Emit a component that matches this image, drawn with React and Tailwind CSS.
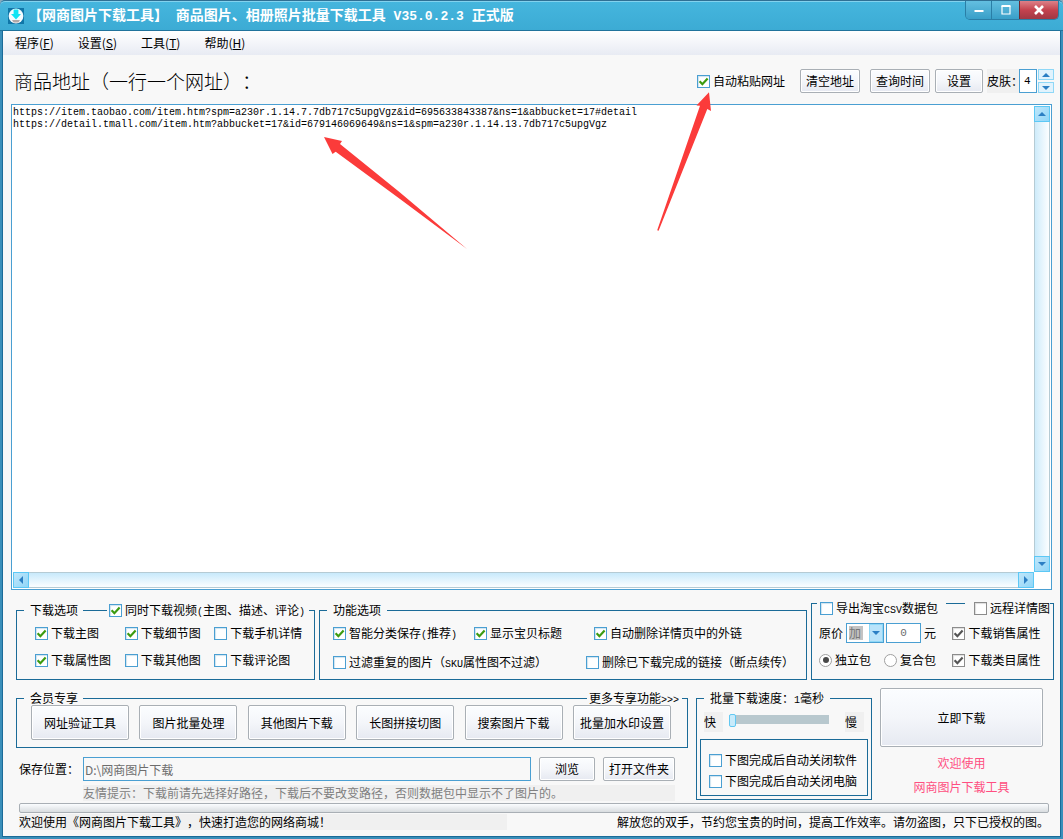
import React from "react";

const MEMBER_TOOLS = [
  "网址验证工具",
  "图片批量处理",
  "其他图片下载",
  "长图拼接切图",
  "搜索图片下载",
  "批量加水印设置",
];

const URLS = [
  "https://item.taobao.com/item.htm?spm=a230r.1.14.7.7db717c5upgVgz&id=695633843387&ns=1&abbucket=17#detail",
  "https://detail.tmall.com/item.htm?abbucket=17&id=679146069649&ns=1&spm=a230r.1.14.13.7db717c5upgVgz",
].join("\n");

const MENUS = [
  ["程序", "F"],
  ["设置", "S"],
  ["工具", "T"],
  ["帮助", "H"],
];

function Mono({ children }) {
  return <span className="font-['Liberation_Mono',monospace] text-[10px] leading-none">{children}</span>;
}

function Check({ children, checked = false, gray = false, className = "" }) {
  return (
    <label className={`flex h-4 items-center gap-[3px] whitespace-nowrap ${className}`}>
      <span className="grid size-[13px] shrink-0">
        <input
          type="checkbox"
          defaultChecked={checked}
          className={`peer col-start-1 row-start-1 size-[13px] appearance-none border bg-white ${
            gray
              ? "border-[#8c8c8c] shadow-[inset_1px_1px_1px_#dddddd]"
              : "border-[#4a9fd2] shadow-[inset_1px_1px_1px_#cfe3ef]"
          }`}
        />
        <svg
          viewBox="0 0 13 13"
          className="pointer-events-none invisible col-start-1 row-start-1 size-[13px] peer-checked:visible"
        >
          <path
            d="M2.6 6.2 L5.4 9.2 L10.6 3.6"
            fill="none"
            stroke={gray ? "#555555" : "#3d9b10"}
            strokeWidth="2.2"
          />
        </svg>
      </span>
      <span>{children}</span>
    </label>
  );
}

function Radio({ children, checked = false }) {
  return (
    <label className="flex items-center gap-[3px] whitespace-nowrap">
      <span className="grid size-[13px] shrink-0 place-items-center">
        <input
          type="radio"
          name="package"
          defaultChecked={checked}
          className="peer col-start-1 row-start-1 size-[13px] appearance-none rounded-full border border-[#a0a0a0] bg-white"
        />
        <span className="pointer-events-none invisible col-start-1 row-start-1 size-[6px] rounded-full bg-[#484848] peer-checked:visible" />
      </span>
      <span>{children}</span>
    </label>
  );
}

function Button({ children, className = "" }) {
  return (
    <button
      type="button"
      className={`shrink-0 whitespace-nowrap rounded-[2px] border border-[#a9afb5] bg-linear-to-b from-[#fbfdff] via-[#f4f6fa] to-[#e6e9f1] shadow-[inset_0_0_0_1px_#ffffff] ${className}`}
    >
      {children}
    </button>
  );
}

function Triangle({ dir }) {
  const paths = {
    up: "M0 6 L4 2 L8 6 Z",
    down: "M0 2 L8 2 L4 6 Z",
    left: "M6 0 L2 4 L6 8 Z",
    right: "M2 0 L6 4 L2 8 Z",
  };
  return (
    <svg viewBox="0 0 8 8" className="size-2">
      <path d={paths[dir]} fill="#2b7fc4" />
    </svg>
  );
}

function ScrollButton({ dir, label }) {
  return (
    <button
      type="button"
      aria-label={label}
      className="flex size-4 shrink-0 items-center justify-center border border-[#5cc8f5] bg-linear-to-br from-[#bfe6fa] to-[#8fd6f8]"
    >
      <Triangle dir={dir} />
    </button>
  );
}

function TitleBar() {
  return (
    <header className="flex h-[31px] shrink-0 justify-between rounded-t-[5px] border-t border-b border-t-[#2f7094] border-b-[#20739c] bg-linear-to-b from-[#45b6de] to-[#3cabd4] shadow-[inset_0_1px_0_#82d2ee]">
      <div className="flex items-center gap-1 pl-2">
        <svg viewBox="0 0 16 16" className="size-4">
          <rect width="16" height="16" fill="#0f76a8" />
          <circle cx="8" cy="8" r="7.4" fill="#f4fbff" />
          <path d="M4 12 H12 L10.5 14.6 H5.5 Z" fill="#b0a8a8" />
          <path d="M5.6 1.5 H10.4 V6 H13 L8 11.6 L3 6 H5.6 Z" fill="#10e4f4" />
        </svg>
        <h1 className="whitespace-pre text-[14px] font-bold leading-4 text-white">
          【网商图片下载工具】<span className="font-['Liberation_Mono',monospace] text-[13px]"> </span>
          商品图片、相册照片批量下载工具
          <span className="font-['Liberation_Mono',monospace] text-[13px]"> V35.0.2.3 </span>
          正式版
        </h1>
      </div>
      <div className="mr-1 flex h-[19px] overflow-hidden rounded-b-[5px] border border-t-0 border-[#2a7ea6]">
        <button
          type="button"
          aria-label="最小化"
          className="flex w-[26px] items-center justify-center border-r border-[#2a7ea6] bg-linear-to-b from-[#63bfe0] to-[#389fc8]"
        >
          <svg viewBox="0 0 10 10" className="size-[10px]">
            <path d="M0.5 6 H9.5" stroke="#ffffff" strokeWidth="2" />
          </svg>
        </button>
        <button
          type="button"
          aria-label="最大化"
          className="flex w-[27px] items-center justify-center bg-linear-to-b from-[#63bfe0] to-[#389fc8]"
        >
          <svg viewBox="0 0 10 10" className="size-[10px]">
            <path d="M1 1.5 H9 V9 H1 Z" fill="none" stroke="#ffffff" strokeWidth="1.2" />
            <path d="M0.5 1 H9.5" stroke="#ffffff" strokeWidth="2" />
          </svg>
        </button>
        <button
          type="button"
          aria-label="关闭"
          className="flex w-[39px] items-center justify-center border-l border-[#6e2a33] bg-linear-to-b from-[#dc8088] via-[#c4424e] to-[#a03844]"
        >
          <svg viewBox="0 0 10 10" className="size-[10px]">
            <path d="M1 1 L9 9 M9 1 L1 9" stroke="#ffffff" strokeWidth="2.6" />
          </svg>
        </button>
      </div>
    </header>
  );
}

function MenuBar() {
  return (
    <nav className="flex h-6 shrink-0 items-center gap-6 bg-linear-to-b from-white to-[#e8ebf3] pl-3">
      {MENUS.map(([name, key]) => (
        <button key={key} type="button" className="whitespace-nowrap leading-4">
          {name}(<span className="underline">{key}</span>)
        </button>
      ))}
    </nav>
  );
}

function Toolbar() {
  return (
    <div className="flex h-6 items-center justify-between">
      <label htmlFor="urls" className="whitespace-nowrap pl-[3px] text-[19px] font-light leading-6">
        商品地址（一行一个网址）：
      </label>
      <div className="flex items-center">
        <Check checked>自动粘贴网址</Check>
        <Button className="ml-[15px] h-6 w-[60px]">清空地址</Button>
        <Button className="ml-[10px] h-6 w-[60px]">查询时间</Button>
        <Button className="ml-[5px] h-6 w-12">设置</Button>
        <label htmlFor="skin" className="ml-1 h-6 w-8 whitespace-nowrap bg-[#f0f0f0] leading-6">
          皮肤：
        </label>
        <input
          id="skin"
          defaultValue="4"
          className="h-6 w-[18px] border border-[#4a9fd2] bg-white pl-1 font-['Liberation_Mono',monospace] text-[11px]"
        />
        <div className="ml-px flex flex-col gap-[2px]">
          <button
            type="button"
            aria-label="增加"
            className="flex h-[11px] w-4 items-center justify-center border border-[#8fd8f7] bg-[#e1f3fd]"
          >
            <Triangle dir="up" />
          </button>
          <button
            type="button"
            aria-label="减少"
            className="flex h-[11px] w-4 items-center justify-center border border-[#8fd8f7] bg-[#e1f3fd]"
          >
            <Triangle dir="down" />
          </button>
        </div>
      </div>
    </div>
  );
}

function UrlBox() {
  return (
    <div className="mr-[2px] flex flex-1 flex-col border border-[#4a9fd2] bg-white p-px">
      <div className="flex flex-1">
        <textarea
          id="urls"
          wrap="off"
          spellCheck="false"
          defaultValue={URLS}
          className="block flex-1 resize-none overflow-hidden bg-white pt-px font-['Liberation_Mono',monospace] text-[10px] leading-3 outline-none"
        />
        <div className="flex w-4 flex-col justify-between bg-linear-to-r from-[#cbeafa] to-white shadow-[inset_1px_0_0_#b5cbd4,inset_-1px_0_0_#b5cbd4]">
          <ScrollButton dir="up" label="向上滚动" />
          <ScrollButton dir="down" label="向下滚动" />
        </div>
      </div>
      <div className="mr-4 flex h-4 justify-between bg-linear-to-b from-[#c4e8fb] to-white shadow-[inset_0_1px_0_#b5cbd4,inset_0_-1px_0_#b5cbd4]">
        <ScrollButton dir="left" label="向左滚动" />
        <ScrollButton dir="right" label="向右滚动" />
      </div>
    </div>
  );
}

function OptionGroups() {
  return (
    <div className="grid grid-cols-[299fr_488fr_243fr] gap-1">
      <fieldset className="mt-[10px] min-w-0 border border-[#1b6b98]">
        <legend className="ml-[7px] flex h-5 items-center pl-[6px] pr-1">
          <span>下载选项</span>
          <span className="ml-[5px] mr-[2px] h-px w-6 bg-[#1b6b98]" />
          <Check checked>
            同时下载视频<Mono>(</Mono>主图、描述、评论<Mono>)</Mono>
          </Check>
        </legend>
        <div className="grid grid-cols-[90fr_90fr_100fr] gap-y-[11px] pb-[11px] pl-[18px] pt-[5px]">
          <Check checked>下载主图</Check>
          <Check checked>下载细节图</Check>
          <Check>下载手机详情</Check>
          <Check checked>下载属性图</Check>
          <Check>下载其他图</Check>
          <Check>下载评论图</Check>
        </div>
      </fieldset>

      <fieldset className="mt-[10px] min-w-0 border border-[#1b6b98]">
        <legend className="ml-[7px] flex h-5 items-center px-[6px]">功能选项</legend>
        <div className="flex flex-col gap-[13px] pl-[13px] pt-[5px]">
          <div className="grid grid-cols-[141fr_120fr_212fr]">
            <Check checked>
              智能分类保存<Mono>(</Mono>推荐<Mono>)</Mono>
            </Check>
            <Check checked>显示宝贝标题</Check>
            <Check checked>自动删除详情页中的外链</Check>
          </div>
          <div className="grid grid-cols-[253fr_220fr]">
            <Check>
              过滤重复的图片（<Mono>SKU</Mono>属性图不过滤）
            </Check>
            <Check>删除已下载完成的链接（断点续传）</Check>
          </div>
        </div>
      </fieldset>

      <fieldset className="min-w-0 border border-[#1b6b98]">
        <legend className="ml-[5px] flex h-[26px] w-[calc(100%-8px)] items-end pl-[3px]">
          <Check>
            导出淘宝<Mono>CSV</Mono>数据包
          </Check>
          <span className="ml-2 mr-[9px] h-px flex-1 self-center bg-[#1b6b98]" />
          <Check gray>远程详情图</Check>
        </legend>
        <div className="grid grid-cols-[134fr_101fr] items-center gap-y-[9px] pl-[7px] pt-[7px]">
          <div className="flex items-center">
            <span className="w-[27px]">原价</span>
            <div className="grid h-5 w-[38px] border border-[#4a9fd2] bg-white">
              <select
                aria-label="原价"
                className="col-start-1 row-start-1 m-[2px] w-[14px] appearance-none bg-[#c3c3c3] leading-[14px] text-[#777777] outline-none"
              >
                <option>加</option>
                <option>减</option>
              </select>
              <span className="pointer-events-none col-start-1 row-start-1 flex w-[14px] items-center justify-center justify-self-end border border-[#8fd8f7] bg-[#b9e3fa]">
                <Triangle dir="down" />
              </span>
            </div>
            <input
              aria-label="价格"
              defaultValue="0"
              className="ml-[2px] mr-[3px] h-5 w-[35px] border border-[#4a9fd2] bg-white text-center font-['Liberation_Mono',monospace] text-[11px] text-[#6d6d6d]"
            />
            <span>元</span>
          </div>
          <Check checked gray>
            下载销售属性
          </Check>
          <div className="flex gap-[13px]">
            <Radio checked>独立包</Radio>
            <Radio>复合包</Radio>
          </div>
          <Check checked gray>
            下载类目属性
          </Check>
        </div>
      </fieldset>
    </div>
  );
}

function MemberTools() {
  return (
    <fieldset className="mt-[3px] min-w-0 border border-[#1b6b98]">
      <legend className="ml-[7px] flex h-[14px] w-[calc(100%-12px)] items-center pl-[6px] pr-[3px] leading-[14px]">
        <span>会员专享</span>
        <span className="ml-[5px] mr-[2px] h-px flex-1 bg-[#1b6b98]" />
        <a href="#more">
          更多专享功能<Mono>&gt;&gt;&gt;</Mono>
        </a>
      </legend>
      <div className="flex justify-between pb-[7px] pl-[14px] pr-4">
        {MEMBER_TOOLS.map((tool) => (
          <Button key={tool} className="h-[35px] w-[98px]">
            {tool}
          </Button>
        ))}
      </div>
    </fieldset>
  );
}

function SaveLocation() {
  return (
    <div className="grid grid-cols-[64px_1fr] gap-y-1 pl-[3px] pr-[13px] pt-[9px]">
      <label htmlFor="path" className="self-center whitespace-nowrap">
        保存位置：
      </label>
      <div className="flex">
        <input
          id="path"
          defaultValue="D:\网商图片下载"
          className="mr-2 h-6 min-w-0 flex-1 border border-[#4a9fd2] bg-[#f8f8f8] pl-px text-[#6d6d6d]"
        />
        <Button className="mr-2 h-6 w-14">浏览</Button>
        <Button className="h-6 w-[72px]">打开文件夹</Button>
      </div>
      <p className="col-start-2 whitespace-nowrap bg-[#f0f0f0] text-[#808080]">
        友情提示：下载前请先选择好路径，下载后不要改变路径，否则数据包中显示不了图片的。
      </p>
    </div>
  );
}

function SpeedGroup() {
  return (
    <fieldset className="mt-[3px] min-w-0 self-start border border-[#1b6b98] px-[3px] pb-[3px]">
      <legend className="ml-1 h-[14px] whitespace-nowrap px-[6px] leading-[14px]">
        批量下载速度：<Mono>1</Mono>毫秒
      </legend>
      <div className="mt-[7px] flex h-5 px-1">
        <span className="w-[19px] bg-[#f0f0f0] leading-5">快</span>
        <input
          type="range"
          aria-label="批量下载速度"
          min="0"
          max="100"
          defaultValue="0"
          className="ml-[6px] mr-auto mt-px h-[13px] w-[100px] appearance-none bg-transparent [&::-webkit-slider-runnable-track]:h-[9px] [&::-webkit-slider-runnable-track]:bg-[#b8c8ce] [&::-webkit-slider-thumb]:-mt-px [&::-webkit-slider-thumb]:h-[13px] [&::-webkit-slider-thumb]:w-[7px] [&::-webkit-slider-thumb]:appearance-none [&::-webkit-slider-thumb]:rounded-[2px] [&::-webkit-slider-thumb]:border [&::-webkit-slider-thumb]:border-[#62c8f2] [&::-webkit-slider-thumb]:bg-[#c8ebfb]"
        />
        <span className="w-[19px] bg-[#f0f0f0] leading-5">慢</span>
      </div>
      <div className="mt-[7px] flex flex-col gap-[5px] border border-[#1b6b98] pb-[6px] pl-2 pt-3">
        <Check>下图完成后自动关闭软件</Check>
        <Check>下图完成后自动关闭电脑</Check>
      </div>
    </fieldset>
  );
}

function RedArrows() {
  return (
    <svg
      viewBox="0 0 400 170"
      className="pointer-events-none absolute left-[320px] top-[85px] h-[170px] w-[400px]"
    >
      <g fill="#fb3b3a">
        <path d="M4 52 L22 56 L20 59 L80 107.5 L147 164 L80 114 L15.7 66.7 L12.5 69 Z" />
        <path d="M389 7.3 L391 26 L387.3 24 L338.6 145.7 L337.2 145.2 L380 20.7 L376.5 20.4 Z" />
      </g>
    </svg>
  );
}

export default function App() {
  return (
    <div className="bg-[#88aabd]">
      <div className="relative flex min-h-screen flex-col overflow-hidden rounded-t-[5px] bg-[#3a8fba] pb-[2px] font-['Noto_Sans_CJK_SC',sans-serif] text-[12px] leading-4 text-black [text-spacing-trim:space-all]">
        <TitleBar />
        <div className="ml-[2px] mr-[2px] flex flex-1 flex-col border-x border-b border-[#1b6b98] bg-[#f8f8f8]">
          <MenuBar />
          <main className="flex flex-1 flex-col pb-[6px] pl-2 pr-[6px] pt-[14px]">
            <Toolbar />
            <div className="mt-[11px] flex flex-1 flex-col">
              <UrlBox />
            </div>
            <div className="pl-[5px]">
              <OptionGroups />
              <div className="mt-2 grid grid-cols-[672fr_176fr_163fr] gap-x-2 pr-[11px]">
                <div className="min-w-0">
                  <MemberTools />
                  <SaveLocation />
                </div>
                <SpeedGroup />
                <div className="flex flex-col items-center text-[#ff4f81]">
                  <Button className="h-[59px] w-full text-black">立即下载</Button>
                  <p className="mt-2">欢迎使用</p>
                  <p className="mt-2">网商图片下载工具</p>
                </div>
              </div>
              <div className="ml-[3px] mr-[5px] mt-[2px] h-[10px] rounded-[2px] border border-[#a9afb5] bg-linear-to-b from-[#fbfdff] to-[#d9dde0]" />
              <footer className="ml-[3px] mr-[5px] mt-px flex justify-between whitespace-nowrap">
                <p className="w-[488px] bg-[#f0f0f0]">
                  欢迎使用《网商图片下载工具》，快速打造您的网络商城！
                </p>
                <p>解放您的双手，节约您宝贵的时间，提高工作效率。请勿盗图，只下已授权的图。</p>
              </footer>
            </div>
          </main>
        </div>
        <RedArrows />
      </div>
    </div>
  );
}
